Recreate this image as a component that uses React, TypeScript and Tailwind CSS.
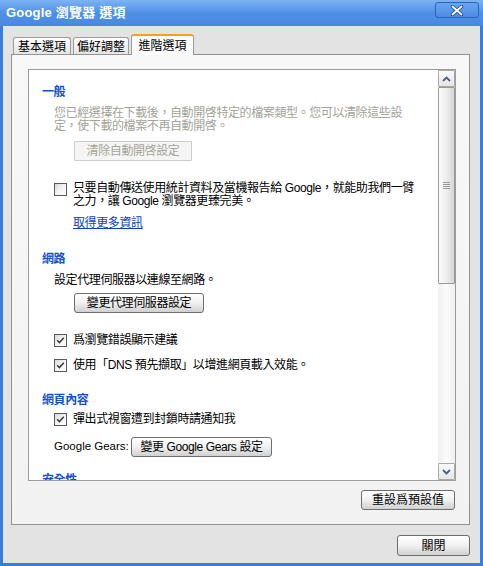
import React from "react";

const FONT = "font-['Liberation_Sans','Noto_Sans_CJK_TC',sans-serif]";

function Check() {
  return (
    <div className="w-[13px] h-[13px] border border-[#5a5a5a] bg-gradient-to-br from-[#d9d9d9] via-[#f3f3f3] to-white flex items-center justify-center shrink-0">
      <svg width="9" height="9" viewBox="0 0 9 9">
        <path d="M1.2 4.3 L3.4 6.6 L7.8 1.8" stroke="#3a3a3a" strokeWidth="1.5" fill="none" />
      </svg>
    </div>
  );
}

function EmptyCheck() {
  return (
    <div className="w-[13px] h-[13px] border border-[#5a5a5a] bg-gradient-to-br from-[#d9d9d9] via-[#f3f3f3] to-white shrink-0" />
  );
}

function Caret({ up }: { up: boolean }) {
  return (
    <svg width="9" height="6" viewBox="0 0 9 6">
      <path
        d={up ? "M1 5 L4.5 1.5 L8 5" : "M1 1 L4.5 4.5 L8 1"}
        stroke="#4d5f80"
        strokeWidth="1.8"
        fill="none"
      />
    </svg>
  );
}

export default function App() {
  return (
    <div className={`w-[483px] h-[566px] bg-[#3b7bd9] flex flex-col ${FONT} text-[12px] text-black overflow-hidden`}>
      {/* Title bar */}
      <div className="h-[26px] shrink-0 bg-gradient-to-b from-[#7db3f3] via-[#4e8fe6] to-[#4889e3] flex items-center justify-between pl-[6px] pr-[4px]">
        <div className="text-white font-bold text-[13px] leading-none pb-[1px] tracking-[0.2px]">Google 瀏覽器 選項</div>
        <div className="self-start mt-[2px] w-[44px] h-[16px] rounded-[3px] border border-[#2d63bd] bg-gradient-to-b from-[#6aa6ef] to-[#4b8be4] flex items-center justify-center">
          <svg width="14" height="11" viewBox="0 0 14 11">
            <path d="M2.5 1.5 L11.5 9.5 M11.5 1.5 L2.5 9.5" stroke="#1f478f" strokeWidth="3.6" strokeLinecap="round" />
            <path d="M2.5 1.5 L11.5 9.5 M11.5 1.5 L2.5 9.5" stroke="#ffffff" strokeWidth="1.8" strokeLinecap="round" />
          </svg>
        </div>
      </div>

      {/* Body */}
      <div className="flex-1 mx-[3px] mb-[3px] bg-[#e3e3e3] pt-[8px] pl-[8px] pr-[10px] pb-[7px] flex flex-col">
        {/* Tabs */}
        <div className="h-[21px] flex items-end gap-[2px] pl-[2px] relative z-10 shrink-0">
          <div className="w-[58px] h-[17px] mb-[1px] rounded-t-[3px] border border-b-0 border-[#9a9a9a] bg-gradient-to-b from-[#fdfdfd] to-[#e4e4e4] flex items-center justify-center leading-none pt-[1px]">基本選項</div>
          <div className="w-[56px] h-[17px] mb-[1px] rounded-t-[3px] border border-b-0 border-[#9a9a9a] bg-gradient-to-b from-[#fdfdfd] to-[#e4e4e4] flex items-center justify-center leading-none pt-[1px]">偏好調整</div>
          <div className="w-[63px] h-[21px] rounded-t-[3px] border border-b-0 border-[#9a9a9a] border-t-[2px] border-t-[#f2a31d] bg-[#fcfcfc] flex items-center justify-center leading-none">進階選項</div>
        </div>

        {/* Panel */}
        <div className="flex-1 -mt-px border border-[#939393] bg-gradient-to-b from-[#f8f8f8] to-[#f2f2f2] pt-[14px] pl-[16px] flex flex-col">
          <div className="w-[428px] h-[412px] border border-[#9c9c9c] bg-white flex">
            {/* Content */}
            <div className="flex-1 overflow-hidden pl-[13px] pt-[15px] tracking-[-0.4px]">
              <div className="text-[#1450d2] font-bold leading-[14px] h-[14px]">一般</div>
              <div className="pl-[12px]">
                <div className="mt-[8px] text-[#a2a29a] leading-[13px] whitespace-nowrap">
                  您已經選擇在下載後，自動開啓特定的檔案類型。您可以清除這些設<br />定，使下載的檔案不再自動開啓。
                </div>
                <div className="mt-[8px] ml-[20px] w-[118px] h-[20px] border border-[#cdcdcd] bg-[#f5f5f5] text-[#a4a49c] flex items-center justify-center leading-none rounded-[1px]">清除自動開啓設定</div>
                <div className="mt-[21px] flex gap-[6px]">
                  <div className="mt-[1px]"><EmptyCheck /></div>
                  <div className="leading-[13px] whitespace-nowrap">
                    只要自動傳送使用統計資料及當機報告給 Google，就能助我們一臂<br />之力，讓 Google 瀏覽器更臻完美。
                  </div>
                </div>
                <div className="mt-[9px] ml-[19px] leading-[13px] text-[#0b3fbf] underline underline-offset-1">取得更多資訊</div>
              </div>

              <div className="mt-[22px] text-[#1450d2] font-bold leading-[14px] h-[14px]">網路</div>
              <div className="pl-[12px]">
                <div className="mt-[8px] leading-[13px]">設定代理伺服器以連線至網路。</div>
                <div className="mt-[6px] ml-[20px] w-[130px] h-[20px] rounded-[3px] border border-[#6e6e6e] bg-gradient-to-b from-white via-[#f1f1f1] to-[#d0d0d0] flex items-center justify-center leading-none">變更代理伺服器設定</div>
                <div className="mt-[21px] flex items-center gap-[6px] h-[13px]">
                  <Check />
                  <div className="leading-[13px]">爲瀏覽錯誤顯示建議</div>
                </div>
                <div className="mt-[12px] flex items-center gap-[6px] h-[13px]">
                  <Check />
                  <div className="leading-[13px] whitespace-nowrap">使用「DNS 預先擷取」以增進網頁載入效能。</div>
                </div>
              </div>

              <div className="mt-[21px] text-[#1450d2] font-bold leading-[14px] h-[14px]">網頁內容</div>
              <div className="pl-[12px]">
                <div className="mt-[6px] flex items-center gap-[6px] h-[13px]">
                  <Check />
                  <div className="leading-[13px]">彈出式視窗遭到封鎖時請通知我</div>
                </div>
                <div className="mt-[11px] flex items-center h-[20px]">
                  <div className="w-[77px] shrink-0 leading-none whitespace-nowrap text-[11.5px] tracking-normal">Google Gears:</div>
                  <div className="w-[141px] shrink-0 h-[20px] rounded-[3px] border border-[#6e6e6e] bg-gradient-to-b from-white via-[#f1f1f1] to-[#d0d0d0] flex items-center justify-center leading-none whitespace-nowrap">變更 Google Gears 設定</div>
                </div>
              </div>

              <div className="mt-[16px] text-[#1450d2] font-bold leading-[14px] h-[14px]">安全性</div>
            </div>

            {/* Scrollbar */}
            <div className="w-[17px] flex flex-col bg-gradient-to-r from-[#f0f0f0] via-[#fbfbfb] to-[#f0f0f0]">
              <div className="h-[17px] border border-[#a9a9a9] bg-gradient-to-b from-[#fafafa] to-[#e6e6e6] flex items-center justify-center rounded-[1px]">
                <Caret up={true} />
              </div>
              <div className="h-[197px] border border-[#999999] bg-gradient-to-r from-[#fbfbfb] via-[#eeeeee] to-[#d6d6d6] flex items-center justify-center rounded-[1px]">
                <div className="flex flex-col gap-[1px]">
                  <div className="w-[7px] h-px bg-[#9a9a9a]" />
                  <div className="w-[7px] h-px bg-[#9a9a9a]" />
                  <div className="w-[7px] h-px bg-[#9a9a9a]" />
                  <div className="w-[7px] h-px bg-[#9a9a9a]" />
                </div>
              </div>
              <div className="flex-1" />
              <div className="h-[17px] border border-[#a9a9a9] bg-gradient-to-b from-[#fafafa] to-[#e6e6e6] flex items-center justify-center rounded-[1px]">
                <Caret up={false} />
              </div>
            </div>
          </div>

          <div className="w-[428px] mt-[9px] flex justify-end pr-[1px]">
            <div className="w-[94px] h-[20px] rounded-[3px] border border-[#6e6e6e] bg-gradient-to-b from-white via-[#f1f1f1] to-[#d0d0d0] flex items-center justify-center leading-none">重設爲預設值</div>
          </div>
        </div>

        {/* Close row */}
        <div className="mt-[10px] flex justify-end shrink-0">
          <div className="w-[73px] h-[21px] rounded-[3px] border border-[#6e6e6e] bg-gradient-to-b from-white via-[#f1f1f1] to-[#d0d0d0] flex items-center justify-center leading-none">關閉</div>
        </div>
      </div>
    </div>
  );
}
